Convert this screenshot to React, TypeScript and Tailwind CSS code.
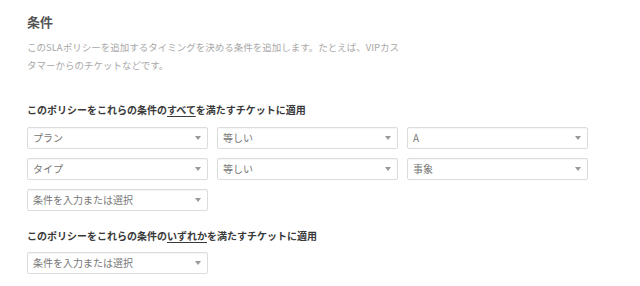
import React from "react";

const font = { fontFamily: '"Noto Sans CJK JP", "Noto Sans", sans-serif' };

function Select({ label }: { label: string }) {
  return (
    <div className="flex h-[22px] w-[181px] items-center justify-between rounded-[2px] border border-[#dcdcdc] bg-white pl-[5px] pr-[6px] shadow-[inset_0_1px_1px_rgba(0,0,0,0.04)]">
      <span className="text-[10px] leading-[14px] text-[#777]">{label}</span>
      <span className="h-0 w-0 border-x-[3px] border-t-[4px] border-x-transparent border-t-[#999]" />
    </div>
  );
}

export default function App() {
  return (
    <div className="h-[286px] w-[640px] bg-white pl-[27px] pt-[13px]" style={font}>
      <h1 className="text-[13px] font-bold leading-[18px] text-[#555]">条件</h1>
      <p className="mt-[7px] w-[380px] text-[9.5px] leading-[18px] text-[#a8a8a8]">
        このSLAポリシーを追加するタイミングを決める条件を追加します。たとえば、VIPカス
        <br />
        タマーからのチケットなどです。
      </p>
      <h2 className="mt-[29px] text-[10px] font-bold leading-[14px] text-[#3a3a3a]">
        このポリシーをこれらの条件の<span className="underline underline-offset-2">すべて</span>を満たすチケットに適用
      </h2>
      <div className="mt-[10px] flex flex-col gap-[9px]">
        <div className="flex gap-[9px]">
          <Select label="プラン" />
          <Select label="等しい" />
          <Select label="A" />
        </div>
        <div className="flex gap-[9px]">
          <Select label="タイプ" />
          <Select label="等しい" />
          <Select label="事象" />
        </div>
        <div className="flex gap-[9px]">
          <Select label="条件を入力または選択" />
        </div>
      </div>
      <h2 className="mt-[18px] text-[10px] font-bold leading-[14px] text-[#3a3a3a]">
        このポリシーをこれらの条件の<span className="underline underline-offset-2">いずれか</span>を満たすチケットに適用
      </h2>
      <div className="mt-[9px]">
        <Select label="条件を入力または選択" />
      </div>
    </div>
  );
}
